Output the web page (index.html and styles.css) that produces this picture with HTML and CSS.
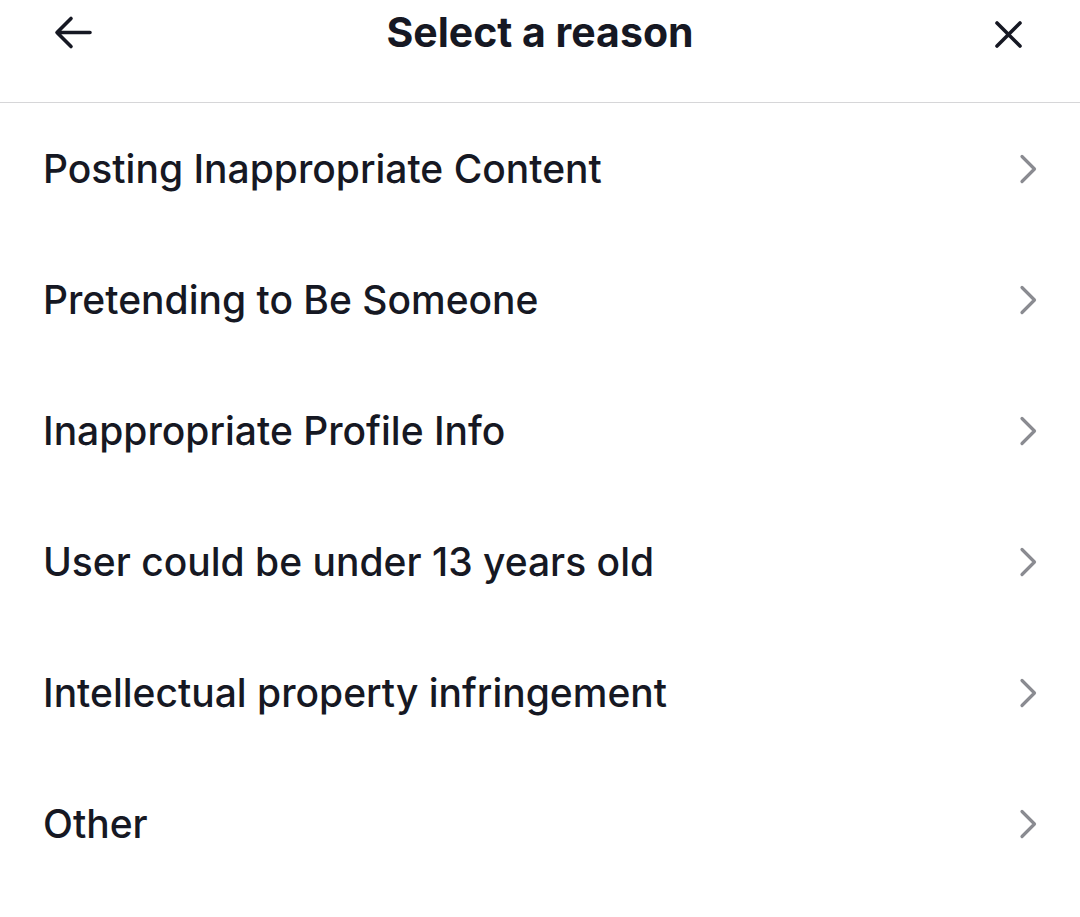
FILE: index.html
```html
<!DOCTYPE html>
<html>
<head>
<meta charset="utf-8">
<link rel="stylesheet" href="styles.css">
</head>
<body>
<div class="screen">
  <header class="header">
    <button class="icon-btn back" aria-label="Back">
      <svg width="40" height="40" viewBox="0 0 40 40"><path d="M37 17.5H5 M18 3.5L4 17.5L18 31.5" fill="none" stroke="#161823" stroke-width="3.6" stroke-linecap="round" stroke-linejoin="round"/></svg>
    </button>
    <h1 class="title">Select a reason</h1>
    <button class="icon-btn close" aria-label="Close">
      <svg width="28" height="28" viewBox="0 0 28 28"><path d="M2 2L25 25M25 2L2 25" fill="none" stroke="#161823" stroke-width="3.6" stroke-linecap="round"/></svg>
    </button>
  </header>
  <ul class="list">
    <li class="row"><span class="label">Posting Inappropriate Content</span><svg class="chev" width="20" height="32" viewBox="0 0 20 32"><path d="M3 3.5L15.5 16L3 28.5" fill="none" stroke="#8a8b91" stroke-width="3.2" stroke-linecap="round" stroke-linejoin="round"/></svg></li>
    <li class="row"><span class="label">Pretending to Be Someone</span><svg class="chev" width="20" height="32" viewBox="0 0 20 32"><path d="M3 3.5L15.5 16L3 28.5" fill="none" stroke="#8a8b91" stroke-width="3.2" stroke-linecap="round" stroke-linejoin="round"/></svg></li>
    <li class="row"><span class="label">Inappropriate Profile Info</span><svg class="chev" width="20" height="32" viewBox="0 0 20 32"><path d="M3 3.5L15.5 16L3 28.5" fill="none" stroke="#8a8b91" stroke-width="3.2" stroke-linecap="round" stroke-linejoin="round"/></svg></li>
    <li class="row"><span class="label">User could be under 13 years old</span><svg class="chev" width="20" height="32" viewBox="0 0 20 32"><path d="M3 3.5L15.5 16L3 28.5" fill="none" stroke="#8a8b91" stroke-width="3.2" stroke-linecap="round" stroke-linejoin="round"/></svg></li>
    <li class="row"><span class="label">Intellectual property infringement</span><svg class="chev" width="20" height="32" viewBox="0 0 20 32"><path d="M3 3.5L15.5 16L3 28.5" fill="none" stroke="#8a8b91" stroke-width="3.2" stroke-linecap="round" stroke-linejoin="round"/></svg></li>
    <li class="row"><span class="label">Other</span><svg class="chev" width="20" height="32" viewBox="0 0 20 32"><path d="M3 3.5L15.5 16L3 28.5" fill="none" stroke="#8a8b91" stroke-width="3.2" stroke-linecap="round" stroke-linejoin="round"/></svg></li>
  </ul>
</div>
</body>
</html>
```

FILE: styles.css
```css
html, body {
  margin: 0;
  padding: 0;
  background: #ffffff;
}
body {
  font-family: "Inter", "Liberation Sans", sans-serif;
  color: #161823;
}
.screen {
  width: 1080px;
  height: 917px;
  overflow: hidden;
}
.header {
  height: 102px;
  border-bottom: 1px solid #d6d6d8;
  display: grid;
  grid-template-columns: 120px 1fr 120px;
  align-items: start;
}
.icon-btn {
  background: none;
  border: none;
  padding: 0;
  display: flex;
}
.back {
  margin: 15px 0 0 53px;
}
.close {
  margin: 21px 0 0 35px;
}
.title {
  margin: 7px 0 0;
  font-size: 41px;
  font-weight: 700;
  text-align: center;
  line-height: 50px;
}
.list {
  list-style: none;
  margin: 0;
  padding: 0;
}
.row {
  height: 131px;
  display: flex;
  align-items: center;
  justify-content: space-between;
  padding: 0 41px 0 43px;
}
.label {
  font-size: 39px;
  font-weight: 500;
  line-height: 48px;
}
.chev {
  display: block;
}
```
